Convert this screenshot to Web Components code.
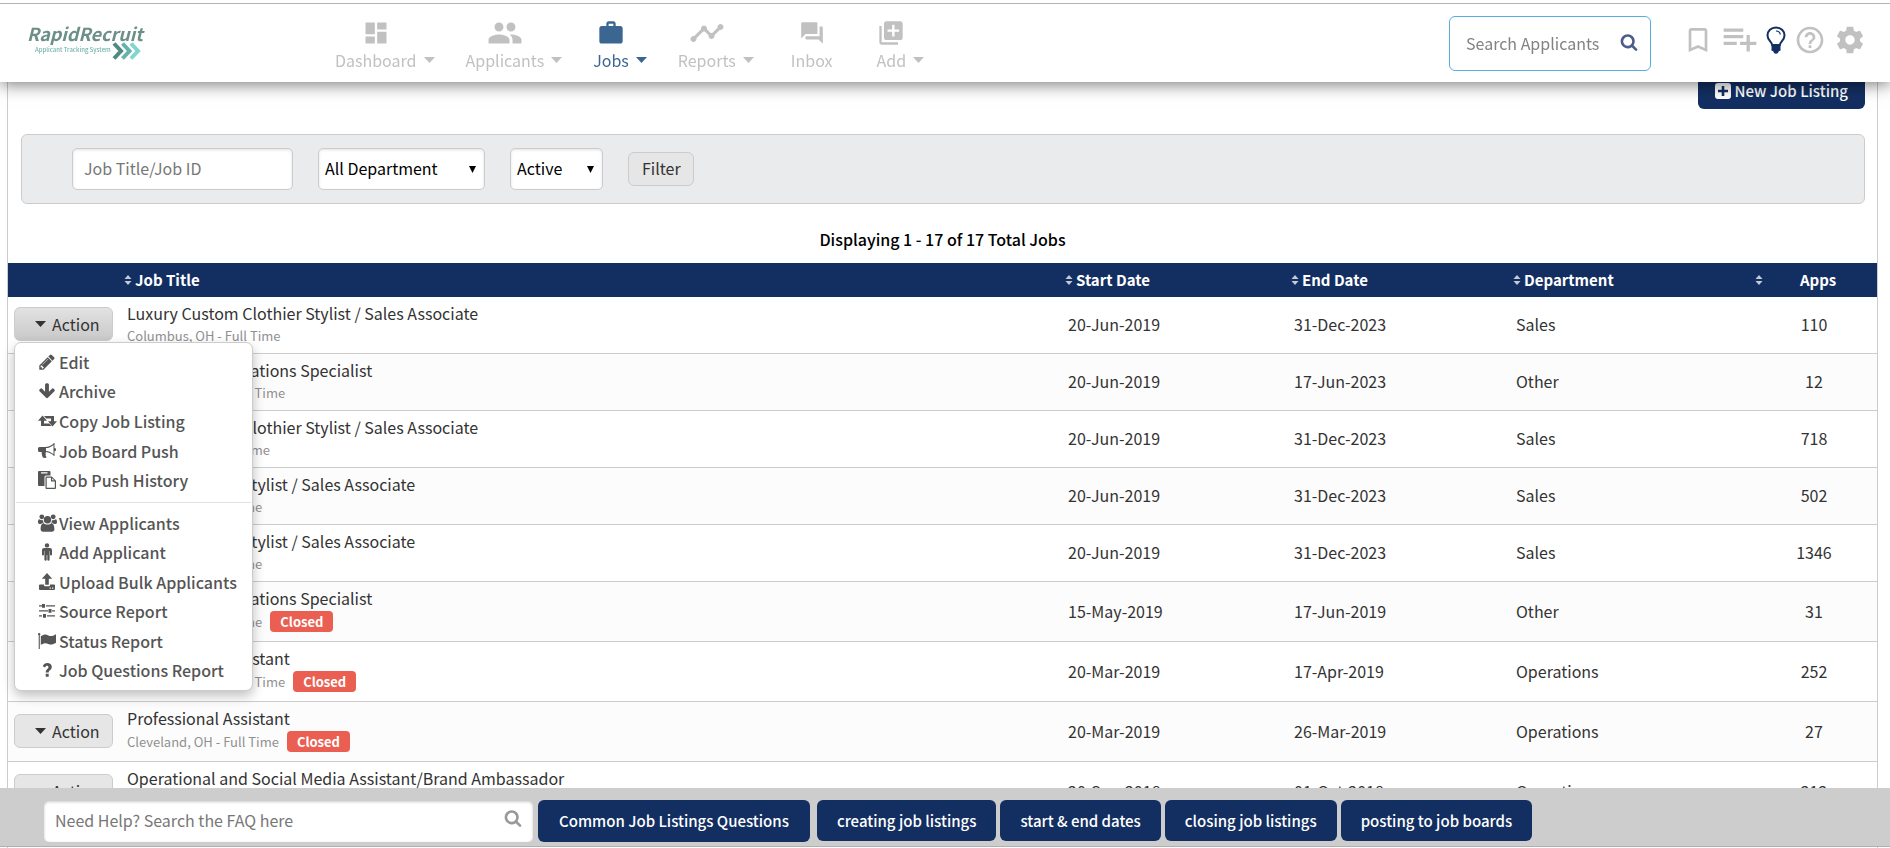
<!DOCTYPE html>
<html lang="en">
<head>
<meta charset="utf-8">
<title>RapidRecruit – Job Listings</title>
<style>
  :root {
    --navy: #132f62;
    --line: #ccc;
    --muted: #c1c1c1;
  }
  body {
    margin: 0;
    background: #fff;
    color: #333;
    font: 16px/24px "Noto Sans CJK SC", "Noto Sans", sans-serif;
  }
</style>
</head>
<body>
<recruit-app></recruit-app>

<script>
const ICONS = {
  dashboard: ['0 0 24 24', '<path d="M3 13h8V3H3v10zm0 8h8v-6H3v6zm10 0h8V11h-8v10zm0-18v6h8V3h-8z"/>'],
  people: ['0 0 24 24', '<path d="M16 11c1.660 0 2.990-1.340 2.990-3S17.660 5 16 5s-3 1.340-3 3 1.340 3 3 3zm-8 0c1.660 0 2.990-1.340 2.990-3S9.660 5 8 5 5 6.340 5 8s1.340 3 3 3zm0 2c-2.330 0-7 1.170-7 3.500V19h14v-2.500c0-2.330-4.670-3.500-7-3.500zm8 0c-.29 0-.62.020-.97.050 1.160.840 1.970 1.970 1.970 3.450V19h6v-2.500c0-2.330-4.670-3.500-7-3.500z"/>'],
  work: ['0 0 24 24', '<path d="M20 6h-4V4c0-1.110-.89-2-2-2h-4c-1.110 0-2 .89-2 2v2H4c-1.110 0-1.990.89-1.990 2L2 19c0 1.110.89 2 2 2h16c1.110 0 2-.89 2-2V8c0-1.110-.89-2-2-2zm-6 0h-4V4h4v2z"/>'],
  timeline: ['0 0 24 24', '<path d="M23 8c0 1.100-.9 2-2 2-.18 0-.35-.02-.51-.07l-3.560 3.550c.05.16.07.34.07.52 0 1.100-.9 2-2 2s-2-.9-2-2c0-.18.02-.36.07-.52l-2.550-2.550c-.16.05-.34.07-.52.07s-.36-.02-.52-.07l-4.550 4.560c.05.16.07.33.07.51 0 1.100-.9 2-2 2s-2-.9-2-2 .9-2 2-2c.18 0 .35.02.51.07l4.560-4.550C8.020 9.360 8 9.180 8 9c0-1.100.9-2 2-2s2 .9 2 2c0 .18-.02.36-.07.52l2.550 2.550c.16-.05.34-.07.52-.07s.36.02.52.07l3.550-3.560C19.020 8.350 19 8.180 19 8c0-1.100.9-2 2-2s2 .9 2 2z"/>'],
  forum: ['0 0 24 24', '<path d="M21 6h-2v9H6v2c0 .55.45 1 1 1h11l4 4V7c0-.55-.45-1-1-1zm-4 6V3c0-.55-.45-1-1-1H3c-.55 0-1 .45-1 1v14l4-4h10c.55 0 1-.45 1-1z"/>'],
  add: ['0 0 24 24', '<path d="M4 6H2v14c0 1.100.9 2 2 2h14v-2H4V6zm16-4H8c-1.100 0-2 .9-2 2v12c0 1.100.9 2 2 2h12c1.100 0 2-.9 2-2V4c0-1.100-.9-2-2-2zm-1 9h-4v4h-2v-4H9V9h4V5h2v4h4v2z"/>'],
  bookmark: ['0 0 24 24', '<path d="M17 3H7c-1.100 0-1.990.9-1.990 2L5 21l7-3 7 3V5c0-1.100-.9-2-2-2zm0 15l-5-2.180L7 18V5h10v13z"/>'],
  playlist: ['1 2 22 22', '<path d="M14 10H2v2h12v-2zm0-4H2v2h12V6zm4 8v-4h-2v4h-4v2h4v4h2v-4h4v-2h-4zM2 16h8v-2H2v2z"/>'],
  bulb: ['0 0 20 28', '<path fill="none" stroke="currentColor" stroke-width="2" d="M10 1.500c-5 0-8.500 3.500-8.500 8 0 4.500 4.500 6.500 4.700 9.500h7.600c.2-3 4.700-5 4.700-9.500 0-4.500-3.500-8-8.500-8z"/><path fill="none" stroke="currentColor" stroke-width="1.200" d="M10 5c2.500.1 4 1.400 4.300 3.500"/><path d="M5.500 19h9v5.500l-2 1c0 3-5 3-5 0l-2-1z"/>'],
  help: ['0 0 24 24', '<path d="M11 18h2v-2h-2v2zm1-16C6.480 2 2 6.480 2 12s4.480 10 10 10 10-4.480 10-10S17.520 2 12 2zm0 18c-4.410 0-8-3.590-8-8s3.590-8 8-8 8 3.590 8 8-3.590 8-8 8zm0-14c-2.210 0-4 1.790-4 4h2c0-1.100.9-2 2-2s2 .9 2 2c0 2-3 1.750-3 5h2c0-2.250 3-2.500 3-5 0-2.210-1.790-4-4-4z"/>'],
  settings: ['0 0 24 24', '<path d="M19.430 12.980c.04-.32.07-.64.07-.98s-.03-.66-.07-.98l2.110-1.650c.19-.15.24-.42.12-.64l-2-3.460c-.12-.22-.39-.3-.61-.22l-2.490 1c-.52-.4-1.080-.73-1.690-.98l-.38-2.650C14.460 2.180 14.250 2 14 2h-4c-.25 0-.46.18-.49.42l-.38 2.650c-.61.25-1.170.59-1.690.98l-2.490-1c-.23-.09-.49 0-.61.22l-2 3.460c-.13.22-.07.49.12.64l2.110 1.650c-.04.32-.07.65-.07.98s.03.66.07.98l-2.110 1.650c-.19.15-.24.42-.12.64l2 3.460c.12.22.39.3.61.22l2.490-1c.52.4 1.080.73 1.690.98l.38 2.650c.03.24.24.42.49.42h4c.25 0 .46-.18.49-.42l.38-2.650c.61-.25 1.170-.59 1.690-.98l2.490 1c.23.09.49 0 .61-.22l2-3.460c.12-.22.07-.49-.12-.64l-2.110-1.650zM12 15.500c-1.930 0-3.500-1.570-3.500-3.500s1.570-3.500 3.500-3.500 3.500 1.570 3.500 3.500-1.570 3.500-3.500 3.500z"/>'],
  search: ['0 0 1792 1792', '<path d="M1216 832q0-185-131.500-316.500t-316.500-131.500-316.500 131.500-131.500 316.500 131.500 316.500 316.500 131.500 316.500-131.500 131.500-316.500zm512 832q0 52-38 90t-90 38q-54 0-90-38l-343-342q-179 124-399 124-143 0-273.500-55.500t-225-150-150-225-55.500-273.500 55.500-273.500 150-225 225-150 273.500-55.500 273.500 55.500 225 150 150 225 55.500 273.500q0 220-124 399l343 343q37 37 37 90z"/>'],
  caret: ['0 0 11 6', '<path d="M0 0h11L5.500 6z"/>'],
  down: ['0 0 7 7', '<path d="M0 0h7L3.500 7z"/>'],
  sort: ['0 0 8 12', '<path d="M4 1l3.500 4h-7zM4 11L.5 7h7z"/>'],
  plus: ['0 0 16 16', '<path fill-rule="evenodd" d="M3 0h10a3 3 0 0 1 3 3v10a3 3 0 0 1-3 3H3a3 3 0 0 1-3-3V3a3 3 0 0 1 3-3zm3.700 3v3.700H3v2.600h3.700V13h2.600V9.300H13V6.700H9.300V3z"/>'],
  pencil: ['0 0 1792 1792', '<path d="M491 1536l91-91-235-235-91 91v107h128v128h107zm523-928q0-22-22-22-10 0-17 7l-542 542q-7 7-7 17 0 22 22 22 10 0 17-7l542-542q7-7 7-17zm-54-192l416 416-832 832h-416v-416zm683 96q0 53-37 90l-166 166-416-416 166-165q36-38 90-38 53 0 91 38l235 234q37 39 37 91z"/>'],
  archive: ['0 0 1792 1792', '<path d="M1675 832q0 53-37 90l-651 652q-39 37-91 37-53 0-90-37l-651-652q-38-36-38-90 0-53 38-91l74-75q39-37 91-37 53 0 90 37l294 294v-704q0-52 38-90t90-38h128q52 0 90 38t38 90v704l294-294q37-37 90-37 52 0 91 37l75 75q37 39 37 91z"/>'],
  copy: ['0 0 19 17', '<path d="M4.500 3L0 8.200h3v5.300h10.500L11.300 11H6V8.200h3zM14.500 14L19 8.800h-3V3.500H6L8.200 6H13v2.800h-3z"/>'],
  push: ['0 0 18 18', '<path fill-rule="evenodd" d="M1.500 5H7c3.500 0 6.500-1.500 9-4h.5v5a1.600 1.600 0 0 1 0 3.200V14H16c-2.500-2.300-5-3.600-8-3.900-.9 1.200.3 2.300-.4 3.200.2 1 .8 1.400 1.200 2-1 .9-3.300.9-4.100 0-.5-1.700-1.300-3-.9-5.200H1.500A1.500 1.500 0 0 1 0 8.600V6.500A1.500 1.500 0 0 1 1.500 5zm14 7.200V2.900c-2.200 1.900-4.700 3-7.500 3.200V9c2.800.3 5.300 1.400 7.500 3.200z"/>'],
  paste: ['0 0 18 18', '<path fill-rule="evenodd" d="M1 0h10.500a1 1 0 0 1 1 1v3.500H8A1.500 1.500 0 0 0 6.500 6v9H1a1 1 0 0 1-1-1V1a1 1 0 0 1 1-1zm2 1.200v1.300h6.500V1.200zM8.500 5.500h5.300L18 9.700V17a1 1 0 0 1-1 1H8.500a1 1 0 0 1-1-1V6.500a1 1 0 0 1 1-1zM8.700 6.700v10.100h8.100v-6.300H13V6.700zM14.200 7.300v2h2z"/>'],
  users: ['0 0 19 18', '<circle cx="9.500" cy="5.800" r="3.700"/><path d="M5.500 9c1 1 2.400 1.500 4 1.500s3-.5 4-1.500c2 .3 2.900 3 2.900 6 0 1.700-1 2.700-2.500 2.700H5.100c-1.500 0-2.500-1-2.500-2.700 0-3 .9-5.700 2.900-6z"/><circle cx="3.800" cy="2.800" r="2.400"/><circle cx="15.200" cy="2.800" r="2.400"/><path d="M5 6.200c.1 1 .3 1.600.7 2.200-1.200.2-2 .7-2.600 1.500H1.700C.6 9.900 0 9.300 0 8.300 0 6.800.3 5.300 1.200 5.200c1.200 1 2.700 1.200 3.800 1zM14 6.200c-.1 1-.3 1.600-.7 2.200 1.200.2 2 .7 2.600 1.500h1.400c1.100 0 1.700-.6 1.700-1.600 0-1.500-.3-3-1.200-3.100-1.200 1-2.700 1.200-3.800 1z"/>'],
  male: ['0 0 18 18', '<circle cx="9" cy="2.400" r="2.200"/><path d="M6 5h6a2 2 0 0 1 2 2v4.500a1 1 0 0 1-2 0V8h-.4v8.800a1.200 1.200 0 0 1-2.300 0V12h-.6v4.800a1.200 1.200 0 0 1-2.300 0V8H6v3.500a1 1 0 0 1-2 0V7a2 2 0 0 1 2-2z"/>'],
  upload: ['0 0 18 18', '<path d="M9 0l5.200 5.800h-3.400v6H7.200v-6H3.800z"/><path fill-rule="evenodd" d="M2 11.500h4V12c0 .8.500 1.300 1.200 1.300h3.600c.7 0 1.200-.5 1.200-1.300v-.5h4a1 1 0 0 1 1 1V16a1 1 0 0 1-1 1H2a1 1 0 0 1-1-1v-3.500a1 1 0 0 1 1-1zm9.600 3v1.200h1.200v-1.200zm2.500 0v1.200h1.200v-1.200z"/>'],
  sliders: ['0 0 18 18', '<path d="M1 3.200h3v1.300H1zM8 3.200h9v1.300H8zM4 2h3v3.800H4zM1 8.200h9v1.300H1zM14 8.200h3v1.300h-3zM10.500 7h3v3.800h-3zM1 13.200h3v1.300H1zM9 13.200h8v1.300H9zM5 12h3v3.800H5z"/>'],
  flag: ['0 0 18 18', '<path d="M0 2.200a1.200 1.200 0 1 1 1.800 1V17H.7V3.200A1.200 1.200 0 0 1 0 2.200zM2.800 4.200C6 2.300 8 2.200 10.300 3.400c2.400 1.200 4.400.7 7.700-1.200v8.600c-3 1.900-5.300 2.300-7.700 1.100-2.300-1.100-4.300-1-7.500.9z"/>'],
  question: ['0 0 18 18', '<path d="M7.700 12.700h3v3h-3zM4.800 5.200C5.700 3 7.200 2 9.300 2c2.500 0 4.500 1.600 4.500 3.900 0 2.900-3.100 3.200-3.100 5.600h-3c0-3.300 2.800-3.700 2.800-5.300 0-.9-.6-1.500-1.400-1.500-.9 0-1.500.6-2.100 1.900z"/>']
};

const define = (name, css, html) => {
  const tpl = document.createElement('template');
  tpl.innerHTML = `<style>*{box-sizing:border-box}${css}</style>`;
  customElements.define(name, class extends HTMLElement {
    connectedCallback() {
      if (this.shadowRoot) return;
      const root = this.attachShadow({ mode: 'open' });
      root.append(tpl.content.cloneNode(true));
      const body = document.createElement('template');
      body.innerHTML = typeof html === 'function' ? html(this) : html;
      root.append(body.content.cloneNode(true));
    }
  });
};

/* Icon: <app-icon name size [height]> */
define('app-icon', `
  :host { display: inline-flex; flex: none; }
  svg { display: block; fill: currentColor; }
`, el => {
  const [box, art] = ICONS[el.getAttribute('name')];
  const w = el.getAttribute('size') || 18;
  const h = el.getAttribute('height') || w;
  return `<svg viewBox="${box}" width="${w}" height="${h}" aria-hidden="true">${art}</svg>`;
});

define('brand-logo', `
  :host { display: block; }
  a { display: grid; grid-template-columns: 84px auto; justify-content: start; color: #6c8f88; text-decoration: none; }
  b { grid-column: 1 / 3; font-size: 18px; line-height: 18px; font-style: italic; font-weight: 700; }
  small { font-size: 6px; line-height: 16px; padding-left: 8px; color: #74b5ac; font-weight: 500; white-space: nowrap; }
  svg { display: block; }
`, `<a href="#home"><b>RapidRecruit</b><small>Applicant Tracking System</small>
  <svg width="32" height="18" viewBox="0 0 32 18" fill="none" stroke-width="4" aria-hidden="true">
    <path stroke="#4f8a83" d="M3 1.500l7 7.500-7 7.500"/><path stroke="#66b3aa" d="M11.500 1.500l7 7.500-7 7.500"/><path stroke="#7fd6cc" d="M20 1.500l7 7.500-7 7.500"/>
  </svg></a>`);

define('nav-item', `
  :host { display: block; color: var(--muted); }
  :host([active]) { color: #3b6691; }
  :host([plain]) { padding: 0 6px; }
  a { display: grid; grid-template: 31px 24px / auto auto; column-gap: 7px; align-items: center; justify-items: center; color: inherit; text-decoration: none; white-space: nowrap; }
  .icon { display: flex; height: 31px; align-items: center; }
  .label { grid-area: 2 / 1; }
  .caret { grid-area: 2 / 2; }
`, el => `<a href="#nav"><span class="icon"><app-icon name="${el.getAttribute('icon')}" size="${el.getAttribute('size')}"></app-icon></span>
  ${el.hasAttribute('plain') ? '' : '<app-icon class="caret" name="caret" size="11" height="6"></app-icon>'}
  <span class="label"><slot></slot></span></a>`);

define('top-bar', `
  :host { display: block; position: fixed; z-index: 20; inset: 0 0 auto; padding-top: 3px; background: #fff; box-shadow: 0 2px 16px rgba(0,0,0,.55); }
  header { display: flex; align-items: flex-start; height: 79px; padding: 12px 24px 0 27px; border-top: 1px solid #b3b3b3; }
  brand-logo { width: 308px; padding-top: 8px; }
  nav { display: flex; gap: 31px; padding-top: 1px; }
  form { display: flex; align-items: center; width: 202px; height: 55px; margin: 0 31px 0 auto; padding: 0 12px 0 16px; border: 1px solid #5aaee0; border-radius: 6px; color: #4c5c8c; }
  input { flex: 1; min-width: 0; border: 0; padding: 0 0 2px; outline: 0; background: none; font: inherit; }
  input::placeholder { color: #828282; opacity: 1; }
  .tools { display: flex; align-items: center; gap: 8px; height: 51px; color: var(--muted); }
  button { display: block; border: 0; padding: 0; background: none; color: inherit; }
  .hot { color: var(--navy); }
`, `<header>
  <brand-logo></brand-logo>
  <nav aria-label="Main">
    <nav-item icon="dashboard" size="28">Dashboard</nav-item>
    <nav-item icon="people" size="36">Applicants</nav-item>
    <nav-item icon="work" size="28" active>Jobs</nav-item>
    <nav-item icon="timeline" size="36">Reports</nav-item>
    <nav-item icon="forum" size="26" plain>Inbox</nav-item>
    <nav-item icon="add" size="28">Add</nav-item>
  </nav>
  <form role="search">
    <input type="text" placeholder="Search Applicants" aria-label="Search Applicants">
    <button type="button" aria-label="Search"><app-icon name="search" size="18"></app-icon></button>
  </form>
  <div class="tools">
    <button aria-label="Bookmarks"><app-icon name="bookmark" size="32"></app-icon></button>
    <button aria-label="Add to list"><app-icon name="playlist" size="36"></app-icon></button>
    <button class="hot" aria-label="Tips"><app-icon name="bulb" size="20" height="28"></app-icon></button>
    <button aria-label="Help"><app-icon name="help" size="32"></app-icon></button>
    <button aria-label="Settings"><app-icon name="settings" size="32"></app-icon></button>
  </div>
</header>`);

define('select-box', `
  :host { display: grid; align-items: center; height: 42px; }
  select { grid-area: 1 / 1; width: 100%; height: 100%; padding: 0 6px 2px; appearance: none; border: 1px solid var(--line); border-radius: 5px; background: #fff; box-shadow: inset 0 1px 3px rgba(0,0,0,.12); color: #000; font: inherit; }
  app-icon { grid-area: 1 / 1; justify-self: end; margin-right: 9px; color: #000; pointer-events: none; }
`, el => `<select aria-label="${el.getAttribute('label')}"><option>${el.getAttribute('value')}</option></select><app-icon name="down" size="7"></app-icon>`);

define('filter-bar', `
  :host { display: block; }
  form { display: flex; align-items: center; height: 70px; padding: 0 50px; border: 1px solid var(--line); border-radius: 6px; background: #eaebed; }
  input { width: 221px; height: 42px; padding: 0 11px 2px; border: 1px solid var(--line); border-radius: 5px; background: #fff; box-shadow: inset 0 1px 3px rgba(0,0,0,.12); font: inherit; }
  input::placeholder { color: #777; opacity: 1; }
  form > * + * { margin-left: 25px; }
  .dept { width: 167px; }
  .state { width: 93px; }
  button { height: 34px; padding: 0 12px 2px 13px; border: 1px solid var(--line); border-radius: 6px; background: #e6e6e6; color: #333; font: inherit; }
`, `<form>
  <input type="text" placeholder="Job Title/Job ID" aria-label="Job title or job ID">
  <select-box class="dept" label="Department" value="All Department"></select-box>
  <select-box class="state" label="Status" value="Active"></select-box>
  <button type="button">Filter</button>
</form>`);

define('action-menu', `
  :host { display: block; width: 239px; padding: 4px 0 5px; border: 1px solid var(--line); border-radius: 7px; background: #fff; box-shadow: 0 5px 12px rgba(0,0,0,.25); color: #555; font-weight: 500; }
  ul { display: grid; grid-auto-rows: 1fr; margin: 0; padding: 0; list-style: none; }
  .jobs { height: 148px; }
  .people { height: 177px; }
  hr { margin: 7px 1px 5px; border: 0; border-top: 1px solid #e2e2e2; }
  a { display: flex; align-items: center; gap: 2px; height: 100%; padding-left: 22px; color: inherit; text-decoration: none; white-space: nowrap; }
  .i { display: flex; justify-content: center; width: 20px; }
`, () => {
  const item = ([icon, text]) => `<li role="none"><a role="menuitem" href="#action"><span class="i"><app-icon name="${icon}" size="${icon === 'copy' || icon === 'users' ? 19 : 18}" height="18"></app-icon></span><span>${text}</span></a></li>`;
  return `<ul class="jobs">${[['pencil','Edit'],['archive','Archive'],['copy','Copy Job Listing'],['push','Job Board Push'],['paste','Job Push History']].map(item).join('')}</ul>
  <hr>
  <ul class="people">${[['users','View Applicants'],['male','Add Applicant'],['upload','Upload Bulk Applicants'],['sliders','Source Report'],['flag','Status Report'],['question','Job Questions Report']].map(item).join('')}</ul>`;
});

define('action-button', `
  :host { display: block; position: relative; }
  button { display: flex; align-items: center; gap: 6px; width: 99px; height: 34px; padding: 0 0 0 20px; border: 1px solid var(--line); border-radius: 6px; background: #e6e6e6; color: #333; font: inherit; }
  :host([open]) button { background: linear-gradient(#e2e2e2, #c9c9c9); }
  action-menu { position: absolute; z-index: 5; top: calc(100% + 1px); left: 0; }
`, el => `<button type="button" aria-haspopup="menu"><app-icon name="caret" size="11" height="6"></app-icon>Action</button>
  ${el.hasAttribute('open') ? '<action-menu role="menu"></action-menu>' : ''}`);

const JOBS = [
  ['Luxury Custom Clothier Stylist / Sales Associate', 'Columbus, OH - Full Time', '20-Jun-2019', '31-Dec-2023', 'Sales', 110],
  ['Purchasing Operations Specialist', 'Springfield, OH - Full Time', '20-Jun-2019', '17-Jun-2023', 'Other', 12],
  ['Luxury Custom Clothier Stylist / Sales Associate', 'Norwalk, OH - Full Time', '20-Jun-2019', '31-Dec-2023', 'Sales', 718],
  ['Luxury Custom Stylist / Sales Associate', 'Dayton, OH - Full Time', '20-Jun-2019', '31-Dec-2023', 'Sales', 502],
  ['Luxury Custom Stylist / Sales Associate', 'Dayton, OH - Full Time', '20-Jun-2019', '31-Dec-2023', 'Sales', 1346],
  ['Purchasing Operations Specialist', 'Dayton, OH - Full Time', '15-May-2019', '17-Jun-2019', 'Other', 31, true],
  ['Professional Assistant', 'Springfield, OH - Full Time', '20-Mar-2019', '17-Apr-2019', 'Operations', 252, true],
  ['Professional Assistant', 'Cleveland, OH - Full Time', '20-Mar-2019', '26-Mar-2019', 'Operations', 27, true],
  ['Operational and Social Media Assistant/Brand Ambassador', 'Cleveland, OH - Full Time', '20-Sep-2018', '01-Oct-2018', 'Operations', 212, true]
];

define('jobs-table', `
  :host { display: block; }
  table { width: 100%; table-layout: fixed; border-spacing: 0; }
  .c1 { width: 114px; } .c3 { width: 226px; } .c4 { width: 222px; } .c5 { width: 242px; } .c6 { width: 124px; }
  th { height: 34px; padding: 0 0 0 2px; background: var(--navy); color: #fff; font-size: 15px; font-weight: 700; text-align: left; }
  th span { display: flex; align-items: center; gap: 3px; }
  th app-icon { color: #c3cbd9; }
  th.apps span { gap: 37px; }
  td { padding: 4px 5px 6px; border-bottom: 1px solid var(--line); }
  tr:nth-child(even) td { background: #fcfcfc; }
  td:first-child { padding-left: 6px; }
  td:last-child { padding-right: 7px; text-align: center; }
  .closed td.title { padding-bottom: 8px; }
  a { display: block; color: #333; text-decoration: none; white-space: nowrap; }
  .sub { display: flex; align-items: center; gap: 8px; height: 22px; color: #909090; font-size: 13px; white-space: nowrap; }
  .closed .sub { height: 23px; }
  .badge { padding: 0 10px; border-radius: 4px; background: #ea5f52; color: #fff; font-weight: 700; line-height: 21px; }
`, () => {
  const head = t => `<th scope="col"><span><app-icon name="sort" size="8" height="12"></app-icon>${t}</span></th>`;
  const row = ([title, sub, start, end, dept, apps, closed], i) => `<tr class="${closed ? 'closed' : ''}">
    <td><action-button ${i ? '' : 'open'}></action-button></td>
    <td class="title"><a href="#job">${title}</a><div class="sub"><span>${sub}</span>${closed ? '<span class="badge">Closed</span>' : ''}</div></td>
    <td>${start}</td><td>${end}</td><td>${dept}</td><td>${apps}</td></tr>`;
  return `<table>
  <colgroup><col class="c1"><col><col class="c3"><col class="c4"><col class="c5"><col class="c6"></colgroup>
  <thead><tr><th></th>${head('Job Title')}${head('Start Date')}${head('End Date')}${head('Department')}<th scope="col" class="apps"><span><app-icon name="sort" size="8" height="12"></app-icon>Apps</span></th></tr></thead>
  <tbody>${JOBS.map(row).join('')}</tbody></table>`;
});

define('nav-button', `
  :host { display: block; }
  button { display: flex; align-items: center; gap: 4px; height: var(--h, 41px); padding: 0 var(--pad, 20px); border: 0; border-radius: 6px; background: var(--navy); color: #fff; font: inherit; font-size: 15px; font-weight: 500; white-space: nowrap; }
`, `<button type="button"><slot></slot></button>`);

define('faq-bar', `
  :host { display: flex; position: fixed; z-index: 20; inset: auto 0 1px; gap: 4px; align-items: flex-start; height: 59px; padding: 12px 44px 0; border-bottom: 1px solid #b0b0b0; background: #cdcdcd; }
  form { display: flex; align-items: center; width: 489px; height: 41px; margin: 1px 1px 0 0; padding: 0 11px; border-radius: 5px; background: #fff; box-shadow: inset 0 1px 3px rgba(0,0,0,.2); color: #999; }
  input { flex: 1; min-width: 0; border: 0; padding: 0 0 3px; outline: 0; background: none; font: inherit; }
  input::placeholder { color: #777; opacity: 1; }
  form button { border: 0; padding: 0 0 4px; background: none; color: inherit; }
  .common { --h: 42px; --pad: 21px; margin-right: 3px; }
`, `<form role="search">
    <input type="text" placeholder="Need Help? Search the FAQ here" aria-label="Search the FAQ">
    <button type="button" aria-label="Search"><app-icon name="search" size="18"></app-icon></button>
  </form>
  <nav-button class="common">Common Job Listings Questions</nav-button>
  <nav-button>creating job listings</nav-button>
  <nav-button>start &amp; end dates</nav-button>
  <nav-button>closing job listings</nav-button>
  <nav-button>posting to job boards</nav-button>`);

define('recruit-app', `
  :host { display: block; }
  main { min-height: 100vh; margin: 0 12px 0 7px; padding-top: 73px; border: solid var(--line); border-width: 0 1px; }
  .tools { display: flex; justify-content: flex-end; padding-right: 12px; --h: 36px; --pad: 17px; }
  filter-bar { margin: 25px 12px 0 13px; }
  p { margin: 23px 0 12px; color: #000; font-weight: 500; text-align: center; }
`, `<top-bar></top-bar>
<main>
  <div class="tools"><nav-button><app-icon name="plus" size="16"></app-icon>New Job Listing</nav-button></div>
  <filter-bar></filter-bar>
  <p>Displaying 1 - 17 of 17 Total Jobs</p>
  <jobs-table></jobs-table>
</main>
<faq-bar></faq-bar>`);
</script>
</body>
</html>
